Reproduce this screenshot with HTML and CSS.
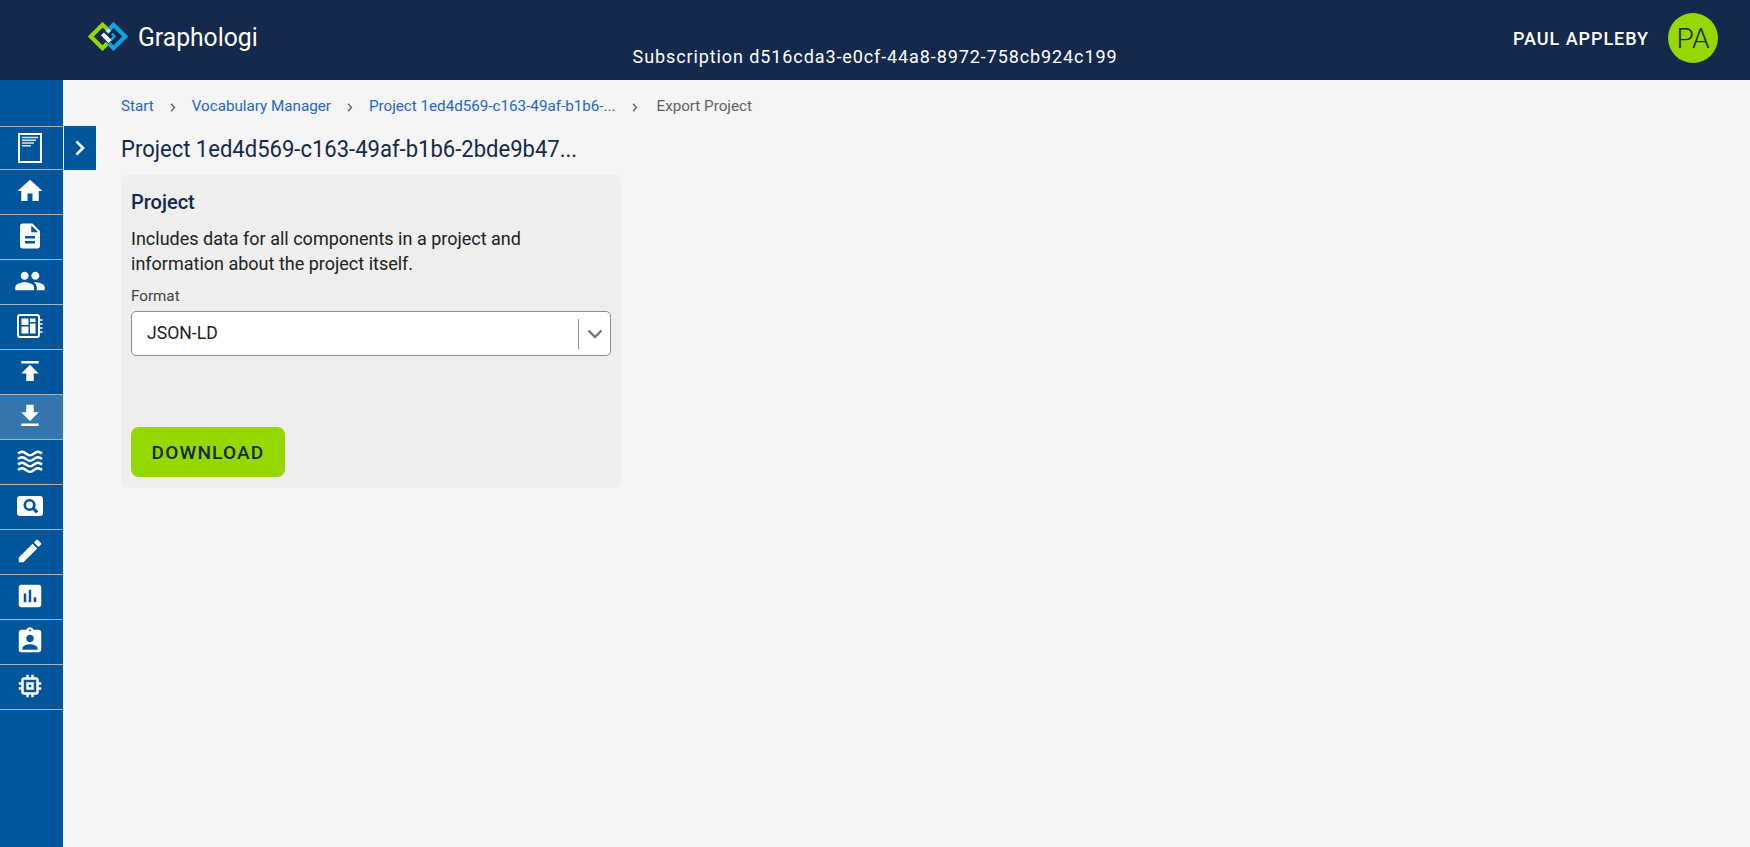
FILE: index.html
```html
<!DOCTYPE html>
<html lang="en">
<head>
<meta charset="utf-8">
<title>Graphologi</title>
<link rel="stylesheet" href="styles.css">
</head>
<body>
<header class="topbar">
  <div class="brand">
    <svg class="logo" viewBox="0 0 40 29" width="40" height="29">
      <path d="M20 7.800L14.500 2.800 2.800 14.500 14.500 26.200 19.500 21.200" fill="none" stroke="#97d700" stroke-width="4.200"/>
      <path d="M18.500 10.500L25.500 2.800 37.200 14.500 25.500 26.200 20.500 21.200" fill="none" stroke="#0ea5dc" stroke-width="4.200"/>
      <path d="M24 11.500L26.500 14.500 22.500 18.500" fill="none" stroke="#0ea5dc" stroke-width="2.500"/>
      <path d="M14.500 12L22 19.500" fill="none" stroke="#fff" stroke-width="4"/>
      <path d="M18 8.500L20.500 6.500 23 9 20.500 11 Z" fill="#fff"/>
    </svg>
    <span class="brand-name">Graphologi</span>
  </div>
  <div class="subscription">Subscription d516cda3-e0cf-44a8-8972-758cb924c199</div>
  <div class="user">
    <span class="user-name">PAUL APPLEBY</span>
    <span class="avatar">PA</span>
  </div>
</header>
<div class="shell">
  <nav class="sidenav">
    <a class="nav-item first"><svg viewBox="0 0 24 30" width="24" height="30"><rect x="1" y="1" width="22" height="28" fill="none" stroke="#fff" stroke-width="2"/><path d="M4 4.500h16M4 7.300h14M4 10h12M4 12.700h9" stroke="#fff" stroke-width="1.400" opacity=".85"/></svg></a>
    <a class="nav-item"><svg viewBox="0 0 24 24" width="30" height="30"><path fill="#fff" d="M10 20v-6h4v6h5v-8h3L12 3 2 12h3v8z"/></svg></a>
    <a class="nav-item"><svg viewBox="0 0 24 24" width="30" height="30"><path fill="#fff" d="M14 2H6c-1.100 0-2 .9-2 2v16c0 1.100.9 2 2 2h12c1.100 0 2-.9 2-2V8l-6-6zm2 16H8v-2h8v2zm0-4H8v-2h8v2zm-3-5V3.500L18.500 9H13z"/></svg></a>
    <a class="nav-item"><svg viewBox="0 0 24 24" width="32" height="32"><path fill="#fff" d="M16 11c1.660 0 2.990-1.340 2.990-3S17.660 5 16 5s-3 1.340-3 3 1.340 3 3 3zm-8 0c1.660 0 2.990-1.340 2.990-3S9.660 5 8 5 5 6.340 5 8s1.340 3 3 3zm0 2c-2.330 0-7 1.170-7 3.500V19h14v-2.500C15 14.170 10.330 13 8 13zm8 0c-.29 0-.62.02-.97.05 1.160.84 1.970 1.970 1.970 3.450V19h6v-2.500c0-2.330-4.670-3.500-7-3.500z"/></svg></a>
    <a class="nav-item"><svg viewBox="0 0 26 24" width="26" height="24"><rect x="1" y="1" width="21" height="22" rx="2" fill="none" stroke="#fff" stroke-width="2"/><path fill="#fff" d="M4.500 4.500h7v6.500h-7zM13 4.500h5.500V8H13zM13 9.500h5.500v10H13zM4.500 12.500h7v7h-7z"/><path stroke="#fff" stroke-width="1.500" d="M23 6h2.500M23 10h2.500M23 14h2.500M23 18h2.500"/></svg></a>
    <a class="nav-item"><svg viewBox="0 0 24 24" width="30" height="30"><path fill="#fff" d="M5 4v2h14V4H5zm0 10h4v6h6v-6h4l-7-7-7 7z"/></svg></a>
    <a class="nav-item active"><svg viewBox="0 0 24 24" width="30" height="30"><path fill="#fff" d="M19 9h-4V3H9v6H5l7 7 7-7zM5 18v2h14v-2H5z"/></svg></a>
    <a class="nav-item"><svg viewBox="0 0 26 23" width="26" height="23"><path fill="none" stroke="#fff" stroke-width="2.500" d="M1 3.500c3-2.500 5-2.500 8 0s5 2.500 8 0 5-2.500 8 0M1 9c3-2.500 5-2.500 8 0s5 2.500 8 0 5-2.500 8 0M1 14.500c3-2.500 5-2.500 8 0s5 2.500 8 0 5-2.500 8 0M1 20c3-2.500 5-2.500 8 0s5 2.500 8 0 5-2.500 8 0"/></svg></a>
    <a class="nav-item"><svg viewBox="0 0 26 20" width="26" height="20"><path fill="#fff" fill-rule="evenodd" d="M3 0h20a3 3 0 0 1 3 3v14a3 3 0 0 1-3 3H3a3 3 0 0 1-3-3V3a3 3 0 0 1 3-3zm9.500 3a6 6 0 1 0 3.200 11.100l3.400 3.400 2.200-2.200-3.400-3.400A6 6 0 0 0 12.500 3zm0 2.600a3.400 3.400 0 1 1 0 6.800 3.400 3.400 0 0 1 0-6.800z"/></svg></a>
    <a class="nav-item"><svg viewBox="0 0 24 24" width="30" height="30"><path fill="#fff" d="M3 17.250V21h3.750L17.810 9.940l-3.750-3.750L3 17.250zM20.710 7.040c.39-.39.39-1.020 0-1.410l-2.340-2.340c-.39-.39-1.020-.39-1.410 0l-1.830 1.830 3.750 3.750 1.830-1.830z"/></svg></a>
    <a class="nav-item"><svg viewBox="0 0 24 24" width="30" height="30"><path fill="#fff" d="M19 3H5c-1.100 0-2 .9-2 2v14c0 1.100.9 2 2 2h14c1.100 0 2-.9 2-2V5c0-1.100-.9-2-2-2zM9 17H7v-7h2v7zm4 0h-2V7h2v10zm4 0h-2v-4h2v4z"/></svg></a>
    <a class="nav-item"><svg viewBox="0 0 24 24" width="30" height="30"><path fill="#fff" d="M19 3h-4.180C14.400 1.840 13.300 1 12 1s-2.400.84-2.820 2H5c-1.100 0-2 .9-2 2v14c0 1.100.9 2 2 2h14c1.100 0 2-.9 2-2V5c0-1.100-.9-2-2-2zm-7-.25c.41 0 .75.34.75.75s-.34.750-.75.750-.75-.34-.75-.75.34-.75.75-.75zM12 7c1.660 0 3 1.340 3 3s-1.340 3-3 3-3-1.340-3-3 1.340-3 3-3zm6 12H6v-1.400c0-2 4-3.100 6-3.100s6 1.100 6 3.100V19z"/></svg></a>
    <a class="nav-item"><svg viewBox="0 0 24 24" width="30" height="30"><path fill="#fff" d="M15 9H9v6h6V9zm-2 4h-2v-2h2v2zm8-2V9h-2V7c0-1.100-.9-2-2-2h-2V3h-2v2h-2V3H9v2H7c-1.100 0-2 .9-2 2v2H3v2h2v2H3v2h2v2c0 1.100.9 2 2 2h2v2h2v-2h2v2h2v-2h2c1.100 0 2-.9 2-2v-2h2v-2h-2v-2h2zm-4 6H7V7h10v10z"/></svg></a>
  </nav>
  <button class="collapse" type="button" aria-label="Expand"><svg viewBox="0 0 12 18" width="12" height="18"><path d="M2.500 2.500L9 9l-6.500 6.500" fill="none" stroke="#fff" stroke-width="2.600"/></svg></button>
  <main class="content">
    <ol class="crumbs">
      <li><a>Start</a></li>
      <li class="sep"><svg viewBox="0 0 8 12" width="6" height="9"><path d="M1.500 1l4.500 5-4.500 5" fill="none" stroke="#616161" stroke-width="1.800"/></svg></li>
      <li><a>Vocabulary Manager</a></li>
      <li class="sep"><svg viewBox="0 0 8 12" width="6" height="9"><path d="M1.500 1l4.500 5-4.500 5" fill="none" stroke="#616161" stroke-width="1.800"/></svg></li>
      <li><a>Project 1ed4d569-c163-49af-b1b6-...</a></li>
      <li class="sep"><svg viewBox="0 0 8 12" width="6" height="9"><path d="M1.500 1l4.500 5-4.500 5" fill="none" stroke="#616161" stroke-width="1.800"/></svg></li>
      <li class="current">Export Project</li>
    </ol>
    <h1 class="title"><span>Project 1ed4d569-c163-49af-b1b6-2bde9b47...</span></h1>
    <section class="card">
      <h2 class="card-title">Project</h2>
      <p class="card-desc">Includes data for all components in a project and information about the project itself.</p>
      <label class="field-label">Format</label>
      <div class="select">
        <span class="select-value">JSON-LD</span>
        <span class="select-divider"></span>
        <svg class="select-arrow" viewBox="0 0 16 10" width="16" height="10"><path d="M1.500 1.500L8 8l6.500-6.500" fill="none" stroke="#757575" stroke-width="2.400"/></svg>
      </div>
      <button class="download" type="button">DOWNLOAD</button>
    </section>
  </main>
</div>
</body>
</html>
```
FILE: styles.css
```css
* { box-sizing: border-box; }
html, body { margin: 0; height: 100%; }
body { font-family: Roboto, "Liberation Sans", sans-serif; background: #f5f5f5; color: #212121; overflow: hidden; }
.topbar { height: 80px; background: #14294b; display: flex; align-items: center; position: relative; padding: 0 32px 0 88px; }
.brand { display: flex; align-items: center; gap: 10px; margin-top: -7px; }
.logo { display: block; }
.brand-name { color: #fff; font-size: 26px; font-weight: 400; display: inline-block; transform: scaleX(.95); transform-origin: left center; }
.subscription { position: absolute; left: 0; right: 0; top: 45px; text-align: center; color: #fff; font-size: 18px; letter-spacing: .9px; line-height: 24px; }
.user { margin-left: auto; display: flex; align-items: center; gap: 19px; margin-top: -4px; }
.user-name { color: #fff; font-size: 18px; font-weight: 500; letter-spacing: .95px; }
.avatar { width: 50px; height: 50px; border-radius: 50%; background: #97d700; color: #14294b; display: flex; align-items: center; justify-content: center; font-size: 28px; font-weight: 300; }
.shell { display: flex; height: 767px; position: relative; }
.sidenav { width: 63px; background: #00559b; padding-top: 46px; flex: none; }
.nav-item { height: 45px; display: flex; align-items: center; justify-content: center; padding: 0 3px 2px 0; border-bottom: 1px solid #a9b2b8; }
.nav-item.first { height: 44px; padding-bottom: 0; border-top: 1px solid #a9b2b8; }
.nav-item.active { background: #3577ad; }
.collapse { position: absolute; left: 64px; top: 46px; width: 32px; height: 44px; background: #00559b; border: 0; padding: 0; display: flex; align-items: center; justify-content: center; }
.content { flex: 1; padding: 19px 0 0 58px; }
.crumbs { list-style: none; margin: 0; padding: 0; display: flex; align-items: center; font-size: 15.200px; line-height: 20px; height: 14px; }
.crumbs a { color: #1e66d0; }
.crumbs .sep { margin: 2px 16px 0 16px; display: flex; }
.crumbs .current { color: #616161; margin-left: 3px; }
.title { margin: 19px 0 0; font-size: 24px; font-weight: 400; color: #14294b; line-height: 34px; height: 43px; }
.title span { display: inline-block; transform: scaleX(.918); transform-origin: left center; white-space: nowrap; }
.card { width: 500px; height: 313px; background: #eee; border-radius: 6px; padding: 14px 10px 11px; display: flex; flex-direction: column; }
.card-title { margin: 0; font-size: 20px; font-weight: 500; color: #14294b; line-height: 26px; }
.card-desc { margin: 11px 0 0; max-width: 410px; font-size: 18px; line-height: 25px; color: #212121; }
.field-label { margin-top: 10px; font-size: 15.200px; line-height: 20px; color: #424242; }
.select { margin-top: 5px; height: 45px; background: #fff; border: 1px solid #8e8e8e; border-radius: 5px; display: flex; align-items: center; padding: 0 0 0 15px; }
.select-value { flex: 1; font-size: 17.600px; line-height: 20px; padding-bottom: 2px; }
.select-divider { width: 1px; height: 30px; background: #8e8e8e; }
.select-arrow { margin: 0 7px 0 8px; }
.download { margin-top: auto; width: 154px; height: 50px; background: #97d700; border: 0; border-radius: 8px; color: #14294b; font: 500 19px Roboto, sans-serif; letter-spacing: 1.200px; padding: 0; }
```
